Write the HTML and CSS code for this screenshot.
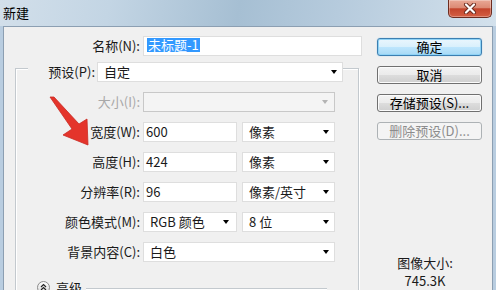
FILE: index.html
```html
<!doctype html>
<html lang="zh-CN">

<head>
    <meta charset="UTF-8">
    <meta name="viewport" content="width=device-width, initial-scale=1.0">
    <title>新建</title>
    <link rel="stylesheet" href="styles.css">
</head>

<body>
    <div class="window">
        <div class="titlebar">
            <span class="title">新建</span>
            <button class="close">
                <svg width="14" height="11" viewBox="0 0 14 11">
                    <path d="M3 1.5 L11 9.5 M11 1.5 L3 9.5" stroke="#6b2a1e" stroke-width="4" stroke-linecap="round" />
                    <path d="M3 1.5 L11 9.5 M11 1.5 L3 9.5" stroke="#ffffff" stroke-width="2.2" stroke-linecap="round" />
                </svg>
            </button>
        </div>

        <div class="client">
            <div class="main">
                <div class="row name-row">
                    <label class="lbl">名称(N):</label>
                    <div class="field name-field"><span class="sel">未标题-1</span></div>
                </div>

                <div class="group">
                    <div class="legend">
                        <label class="lbl">预设(P):</label>
                        <div class="drop preset"><span>自定</span><i class="arrow"></i></div>
                    </div>

                    <div class="row disabled">
                        <label class="lbl">大小(I):</label>
                        <div class="drop wide"><span></span><i class="arrow"></i></div>
                    </div>
                    <div class="row">
                        <label class="lbl">宽度(W):</label>
                        <div class="field num">600</div>
                        <div class="drop unit"><span>像素</span><i class="arrow"></i></div>
                    </div>
                    <div class="row">
                        <label class="lbl">高度(H):</label>
                        <div class="field num">424</div>
                        <div class="drop unit"><span>像素</span><i class="arrow"></i></div>
                    </div>
                    <div class="row">
                        <label class="lbl">分辨率(R):</label>
                        <div class="field num">96</div>
                        <div class="drop unit"><span>像素/英寸</span><i class="arrow"></i></div>
                    </div>
                    <div class="row">
                        <label class="lbl">颜色模式(M):</label>
                        <div class="drop num"><span>RGB 颜色</span><i class="arrow"></i></div>
                        <div class="drop unit"><span>8 位</span><i class="arrow"></i></div>
                    </div>
                    <div class="row">
                        <label class="lbl">背景内容(C):</label>
                        <div class="drop wide"><span>白色</span><i class="arrow"></i></div>
                    </div>

                    <div class="advanced">
                        <svg class="toggle" width="13" height="13" viewBox="0 0 13 13">
                            <defs>
                                <linearGradient id="tg" x1="0" y1="0" x2="0" y2="1">
                                    <stop offset="0" stop-color="#ffffff" />
                                    <stop offset="1" stop-color="#d6d6d6" />
                                </linearGradient>
                            </defs>
                            <circle cx="6.5" cy="6.5" r="6" fill="url(#tg)" stroke="#8a8a8a" />
                            <path d="M4 6 L6.5 3.6 L9 6 M4 9 L6.5 6.6 L9 9" fill="none" stroke="#222" stroke-width="1.2" />
                        </svg>
                        <span class="adv-text">高级</span>
                        <span class="adv-line"></span>
                    </div>
                </div>
            </div>

            <div class="side">
                <button class="btn default">确定</button>
                <button class="btn">取消</button>
                <button class="btn">存储预设(S)...</button>
                <button class="btn" disabled>删除预设(D)...</button>
                <div class="size-info">
                    <div>图像大小:</div>
                    <div>745.3K</div>
                </div>
            </div>
        </div>

        <svg class="mark" width="496" height="290" viewBox="0 0 496 290">
            <polygon points="50,97 54,97 79,124 87,119 88,145 63,135 72,129" fill="#e4342b" stroke="#c92a22" stroke-width="0.8" stroke-linejoin="round" />
        </svg>
    </div>
</body>

</html>
```

FILE: styles.css
```css
body {
    margin: 0;
    font-family: "Noto Sans CJK SC", "Microsoft YaHei", sans-serif;
    font-size: 13px;
    color: #1a1a1a;
}

.window {
    position: relative;
    width: 496px;
    height: 290px;
    overflow: hidden;
    display: flex;
    flex-direction: column;
    background: #b9cde0;
}

.titlebar {
    height: 26px;
    display: flex;
    justify-content: space-between;
    align-items: flex-start;
    background: linear-gradient(100deg, #d2dfea 0%, #c3d5e4 22%, #a6bfd3 48%, #b6cbdd 68%, #d3e1ec 100%);
}

.title {
    padding: 5px 0 0 3px;
    line-height: 16px;
    color: #000;
}

.close {
    width: 44px;
    height: 18px;
    margin-right: 4px;
    padding: 0;
    display: flex;
    align-items: center;
    justify-content: center;
    border: 1px solid #6d2c20;
    border-top: 0;
    border-radius: 0 0 5px 5px;
    background: linear-gradient(#e9a896 0%, #dc8a74 45%, #c3442c 52%, #d45f43 100%);
    box-shadow: inset 0 0 0 1px rgba(255, 255, 255, 0.3);
}

.client {
    flex: 1;
    margin: 0 3px;
    border: 1px solid #8c9fb2;
    border-bottom: 0;
    background: #f0f0f0;
    display: flex;
    overflow: hidden;
}

.main {
    width: 358px;
    padding-top: 9px;
}

.row {
    display: flex;
    align-items: center;
    height: 20px;
}

.lbl {
    text-align: right;
    line-height: 18px;
    white-space: nowrap;
}

.name-row .lbl {
    width: 136px;
}

.field,
.drop {
    box-sizing: border-box;
    height: 20px;
    background: #ffffff;
    border: 1px solid #dedede;
    line-height: 18px;
    white-space: nowrap;
}

.field {
    margin-left: 3px;
    padding-left: 2px;
}

.name-field {
    width: 219px;
    padding-left: 3px;
}

.sel {
    display: inline-block;
    line-height: 14px;
    padding: 0 1px;
    background: #3399ff;
    color: #ffffff;
    vertical-align: 1px;
}

.drop {
    display: flex;
    align-items: center;
    justify-content: space-between;
    padding: 0 5px 0 6px;
}

.arrow {
    width: 0;
    height: 0;
    border-left: 3.5px solid transparent;
    border-right: 3.5px solid transparent;
    border-top: 4px solid #000;
}

.group {
    margin: 12px 0 0 11px;
    width: 342px;
    height: 260px;
    border: 1px solid #c3c9ce;
    box-shadow: 1px 1px 0 #ffffff, inset 1px 1px 0 #ffffff;
}

.legend {
    display: flex;
    align-items: center;
    height: 20px;
    margin: -7px 15px 0 12px;
    background: #f0f0f0;
}

.legend .lbl {
    width: 67px;
}

.preset {
    flex: 1;
    margin-left: 2px;
}

.group .row {
    margin-top: 10px;
}

.group .row .lbl {
    width: 124px;
}

.group .row > :nth-child(2) {
    margin-left: 3px;
}

.num {
    width: 94px;
}

.drop.num {
    padding-right: 7px;
}

.unit {
    width: 93px;
    margin-left: 5px;
}

.wide {
    width: 192px;
}

.disabled .lbl {
    color: #a8a8a8;
}

.disabled .drop {
    background: #f4f4f4;
    border-color: #c8c8c8;
    padding-right: 6px;
}

.disabled .arrow {
    border-top-color: #b4b4b4;
}

.advanced {
    display: flex;
    align-items: center;
    height: 17px;
    margin-top: 17px;
}

.toggle {
    margin-left: 21px;
}

.adv-text {
    margin-left: 6px;
    line-height: 17px;
}

.adv-line {
    flex: 1;
    height: 0;
    margin: 2px 31px 0 4px;
    border-top: 1px solid #c3c9ce;
    border-bottom: 1px solid #ffffff;
}

.side {
    width: 130px;
    padding-top: 11px;
}

.btn {
    display: block;
    box-sizing: border-box;
    width: 105px;
    height: 18px;
    margin: 0 0 10px 15px;
    padding: 0;
    font: inherit;
    line-height: 16px;
    color: #000;
    border: 1px solid #707070;
    border-radius: 3px;
    background: linear-gradient(#f3f3f3 0%, #ebebeb 49%, #dddddd 50%, #cfcfcf 100%);
    box-shadow: inset 0 0 0 1px #fbfbfb;
}

.btn.default {
    border-color: #3c7fb1;
    background: linear-gradient(#eaf6fd 0%, #d9f0fc 49%, #bee6fd 50%, #a7d9f5 100%);
    box-shadow: inset 0 0 0 1px #8fd3f6, 0 0 1px #5fb4e6;
}

.btn:disabled {
    border-color: #adb2b5;
    background: #f4f4f4;
    color: #8c8c8c;
    box-shadow: none;
}

.size-info {
    margin-top: 114px;
    padding-right: 4px;
    text-align: center;
    line-height: 18px;
}

.mark {
    position: absolute;
    top: 0;
    left: 0;
    pointer-events: none;
}
```
